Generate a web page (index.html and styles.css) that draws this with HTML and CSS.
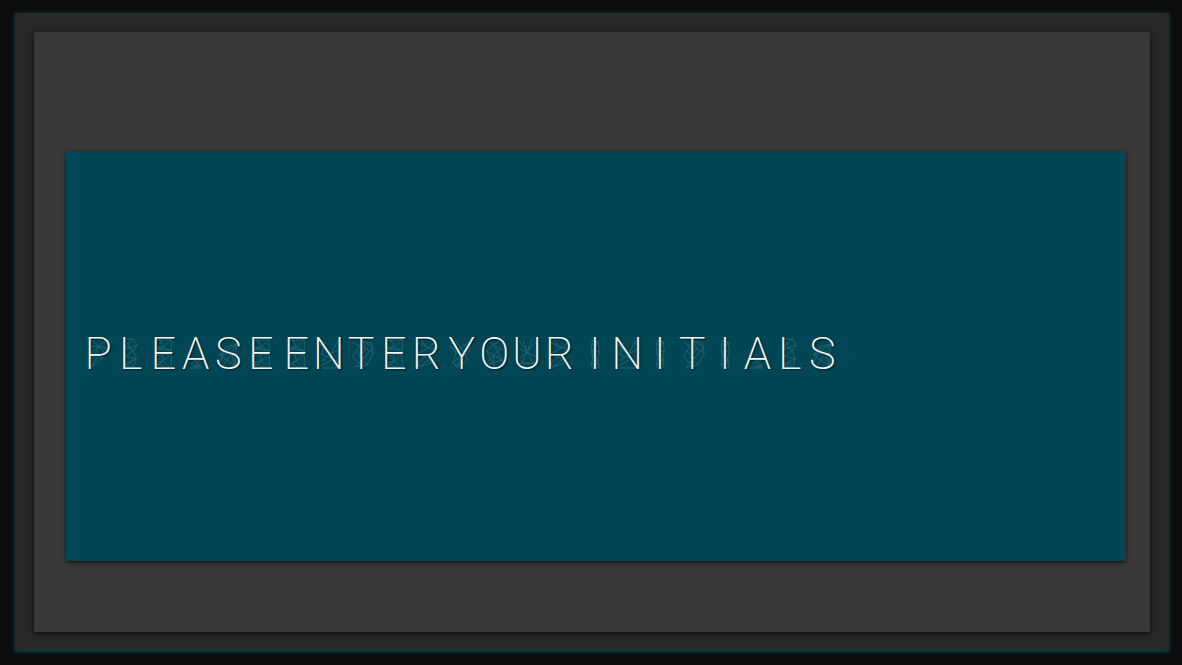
FILE: index.html
```
<!DOCTYPE html>
<html lang="en">
<head>
<meta charset="utf-8">
<title>Initials</title>
<link rel="stylesheet" href="styles.css">
</head>
<body>
<main class="frame">
<div class="board">
<section class="panel">
<h1 class="prompt" id="prompt" aria-label="PLEASE ENTER YOUR INITIALS"></h1>
</section>
</div>
</main>
<script src="script.js"></script>
</body>
</html>
```

FILE: styles.css
```
* { box-sizing: border-box; }
body {
  margin: 0;
  min-height: 100vh;
  display: flex;
  padding: 13px 13px 15px 15px;
  background: #0d0d0d;
  font-family: Roboto, "Open Sans", sans-serif;
}
.frame {
  flex: 1;
  display: flex;
  padding: 19px 19px 18px;
  background: #282828;
  box-shadow: 0 2px 2px 0 rgba(0, 70, 85, .7), 0 1px 5px 0 rgba(0, 70, 85, .8);
}
.board {
  flex: 1;
  display: flex;
  padding: 120px 24px 71px 32px;
  background: #3b3937;
  box-shadow: 0 2px 2px rgba(0, 0, 0, .2), 0 1px 5px rgba(0, 0, 0, .6);
}
.panel {
  flex: 1;
  display: flex;
  align-items: center;
  padding: 0 16px;
  background: #004655;
  box-shadow: 0 2px 2px rgba(0, 0, 0, .2), 0 1px 5px rgba(0, 0, 0, .6);
}
.prompt {
  display: flex;
  gap: 3px;
  width: 73.6%;
  margin: 0;
  padding-bottom: 6px;
  color: #f4f6f6;
  font-size: 45px;
  font-weight: 200;
  line-height: 64px;
  text-shadow: 1px 1px 2px rgba(0, 0, 0, .6);
}
.word { display: flex; }
.letter {
  position: relative;
  flex: 1 1 0;
  min-width: 0;
  text-align: center;
}
.mesh {
  position: absolute;
  inset: 0;
  width: 100%;
  height: 100%;
  fill: none;
  stroke: #8fb5bd;
  stroke-width: 1;
  opacity: .25;
}
```

FILE: script.js
```
// Fine triangulated line work drawn behind each letter.
const meshes = {
  P: "M7 2L17 9L24 3M7 10L17 9L25 12M7 18L17 9L12 19M9 20L21 20L8 31L7 22M8 31L15 20M17 9L23 17",
  L: "M10 2H18L22 8L18 14L21 22L18 32L10 27L21 22L10 19L18 14L10 9L18 2M10 12L22 8M10 32L15 24L18 32M12 5L15 12",
  E: "M7 4L24 2L16 10L24 14L7 11L16 10L7 16M24 2L24 14M7 19L24 17L16 24L24 32L7 26L16 24L7 31M16 24L15 17M24 18V32M16 10L12 2",
  A: "M11 27L15 23L20 28L15 31M9 31H22M15 23L18 31M12 29H21M13 21L20 24",
  S: "M7 18L24 7L14 10L7 18L23 29L24 7M7 27L14 10M10 30L19 16L23 29M7 18L19 16L24 7",
  N: "M7 7L17 18L25 3M7 17L20 22L7 29M8 24L17 17L25 13M20 22L25 25M9 31H24M12 5L8 18",
  T: "M7 5L14 9L7 20L14 26L10 30L22 28L28 16L26 6L17 4L28 10L14 26M14 9L21 12L28 16M17 4L21 12L14 20L22 28M10 14L20 22",
  R: "M7 5L18 11L7 17M18 11L25 5M7 17L20 22L9 30L7 22M20 22L25 30M11 3L16 10L24 12M8 26L17 18M9 30L24 25",
  Y: "M3 9L10 15L7 26L11 31L15 21L23 15L25 4L16 10L10 15L4 9M7 26L16 17L25 11M9 4L17 14L21 23L15 29L7 27",
  O: "M8 14L15 8L23 12L15 18L8 14M8 14L16 29L15 18L24 23L15 8M9 25L15 18L24 23L10 27M12 5L15 8L21 4",
  U: "M8 4L16 15L24 5M8 12L16 15L25 20M16 15L10 26L24 27M8 21L16 15L23 29M9 26H24M12 3L16 15L21 2",
  I: "M13 3L19 5L20 15L18 22L20 30L14 32L12 28L14 18L12 13L13 3M12 8L19 5L12 17L20 23L12 28M13 12L20 15M14 18L19 28"
};

const prompt = document.getElementById("prompt");
for (const text of ["PLEASE", "ENTER", "YOUR", "INITIALS"]) {
  const word = document.createElement("span");
  word.className = "word";
  word.style.flex = `${text.length} 1 0`;
  for (const char of text) {
    const letter = document.createElement("span");
    letter.className = "letter";
    letter.innerHTML = `<svg class="mesh" viewBox="0 -15 32 64" aria-hidden="true"><path d="${meshes[char]}"/></svg>${char}`;
    word.append(letter);
  }
  prompt.append(word);
}
```
